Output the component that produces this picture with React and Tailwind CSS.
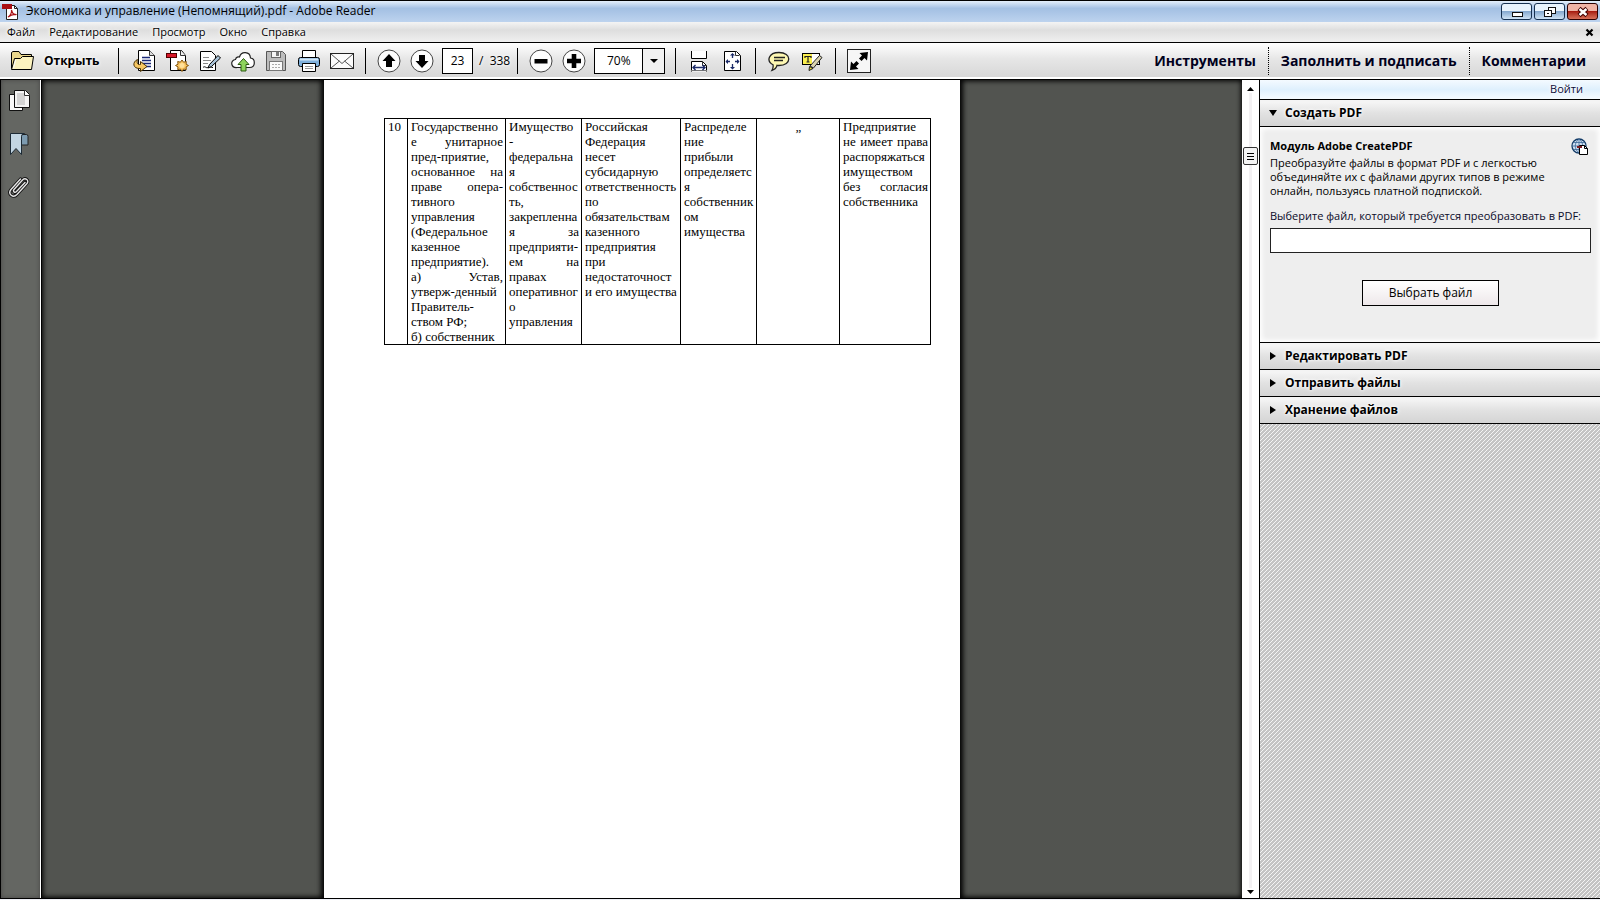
import React, { useState } from 'react';

const MENU = ['Файл', 'Редактирование', 'Просмотр', 'Окно', 'Справка'];

const GLOW = '[text-shadow:0_0_3px_#fff,0_0_5px_#fff]';

// cells of the visible table row: each line is [text, justified]
const CELLS = [
    { width: 'w-[23px]', lines: [['10']] },
    {
        width: 'w-[98px]',
        lines: [
            ['Государственно'],
            ['е унитарное', true],
            ['пред-приятие,'],
            ['основанное на', true],
            ['праве опера-', true],
            ['тивного'],
            ['управления'],
            ['(Федеральное'],
            ['казенное'],
            ['предприятие).'],
            ['а) Устав,', true],
            ['утверж-денный'],
            ['Правитель-'],
            ['ством РФ;'],
            ['б) собственник'],
        ],
    },
    {
        width: 'w-[76px]',
        lines: [
            ['Имущество'],
            ['-'],
            ['федеральна'],
            ['я'],
            ['собственнос'],
            ['ть,'],
            ['закрепленна'],
            ['я за', true],
            ['предприяти-'],
            ['ем на', true],
            ['правах'],
            ['оперативног'],
            ['о'],
            ['управления'],
        ],
    },
    {
        width: 'w-[99px]',
        lines: [
            ['Российская'],
            ['Федерация'],
            ['несет'],
            ['субсидарную'],
            ['ответственность'],
            ['по'],
            ['обязательствам'],
            ['казенного'],
            ['предприятия'],
            ['при'],
            ['недостаточност'],
            ['и его имущества'],
        ],
    },
    {
        width: 'w-[76px]',
        lines: [
            ['Распределе'],
            ['ние'],
            ['прибыли'],
            ['определяетс'],
            ['я'],
            ['собственник'],
            ['ом'],
            ['имущества'],
        ],
    },
    { width: 'w-[83px]', center: true, lines: [['„']] },
    {
        width: 'w-[91px]',
        lines: [
            ['Предприятие'],
            ['не имеет права', true],
            ['распоряжаться'],
            ['имуществом'],
            ['без согласия', true],
            ['собственника'],
        ],
    },
];

const Svg = ({ size = 24, children }) => (
    <svg width={size} height={size} viewBox={`0 0 ${size} ${size}`} fill="none" className="shrink-0">
        {children}
    </svg>
);

const PdfIcon = () => (
    <Svg size={17}>
        <path d="M4.5 2.5h8l3 3v11h-11z" fill="#fff" stroke="#222" />
        <path d="M12.500 2.500v3h3" stroke="#222" />
        <rect x="0" y="1" width="10" height="5" fill="#a80f14" />
        <path d="M6 14c2-1 4-4 3.500-7 1 4 3 5 5 4.500-3-.5-6 .5-8.500 2.500z" stroke="#a80f14" strokeWidth="1.200" />
    </Svg>
);

const FolderIcon = () => (
    <Svg size={26}>
        <path d="M2.500 20.500V4.500l1.500-1h6l2 3h10.500v3" fill="#e9d68c" stroke="#000" />
        <path d="M2.500 21.500l3-11h6l2-2h11l-2 13z" fill="#fcf3bf" stroke="#000" strokeLinejoin="round" />
        <path d="M4.500 20l2.300-8.500" stroke="#fff" />
    </Svg>
);

const ConvertIcon = () => (
    <Svg>
        <path d="M6.500 1.500h11l5 5v15h-16z" fill="#fff" stroke="#000" />
        <path d="M17.500 1.500v5h5" fill="#ddd" stroke="#333" />
        <path d="M10 8.500h8M10 11.500h9M10 14.500h9M14 17.500h5" stroke="#1b2a78" strokeWidth="1.300" />
        <path d="M5.500 10.500C0 13 .5 20 8.500 19.500v3l6.500-5-6.500-5v3c-3 .5-4-1.500-3-5z" fill="#f6c763" stroke="#4b3205" />
    </Svg>
);

const CreatePdfIcon = () => (
    <Svg>
        <path d="M5.500 1.500h11l4 5v15h-15z" fill="#fff" stroke="#000" />
        <path d="M15.500 1.500v5h5" fill="#eee" stroke="#333" />
        <rect x="1.500" y="4.500" width="10" height="4" fill="#d6182a" stroke="#500" />
        <path d="M17 11l1.600 2.200 2.700-.7-.2 2.700 2.400 1.300-2.400 1.400.2 2.700-2.700-.6L17 22.500l-1.600-2.500-2.700.6.3-2.700-2.500-1.400 2.500-1.300-.3-2.700 2.700.7z" fill="#fbc55f" stroke="#85540c" />
        <circle cx="17" cy="16.500" r="2.500" fill="#ffe09a" />
    </Svg>
);

const SignIcon = () => (
    <Svg>
        <path d="M2.500 2.500h11l4 4v15h-15z" fill="#fff" stroke="#000" />
        <path d="M5 8.500h6M5 11.500h8M5 14.500h5" stroke="#888" />
        <path d="M5 18.500c2-2 3 1 5 0s3 0 5 0" stroke="#000" />
        <path d="M20 6.500l2.500 2.500-9 8.500-3.500 1.500 1.500-3.500z" fill="#a9c3d8" stroke="#000" strokeLinejoin="round" />
    </Svg>
);

const CloudIcon = () => (
    <Svg size={26}>
        <path d="M7 19.500C.5 20 0 12 5.500 11.500 6 9 8.500 8.500 9.500 9c1.500-6 10.500-6 11 1 5 .5 5.500 9.500-1 9.500z" fill="#fff" stroke="#222" strokeWidth="1.200" />
        <path d="M13.500 10.500l5.500 6h-3v6.500h-5v-6.500H8z" fill="#8ed45c" stroke="#2c5a12" strokeLinejoin="round" />
    </Svg>
);

const SaveIcon = () => (
    <Svg>
        <path d="M2.500 2.500h16l3 3v16h-19z" fill="#bcbcbc" stroke="#555" />
        <rect x="7.500" y="2.500" width="9" height="6" fill="#f4f4f4" stroke="#666" />
        <rect x="12" y="3" width="3" height="4" fill="#777" />
        <rect x="5.500" y="12.500" width="13" height="9" fill="#fafafa" stroke="#777" />
        <path d="M8 15.500h8M8 18.500h8" stroke="#aaa" strokeDasharray="2 1" />
    </Svg>
);

const PrintIcon = () => (
    <Svg>
        <path d="M5.500 10V1.500h13V10" fill="#fff" stroke="#000" />
        <rect x="1.500" y="8.500" width="21" height="9" rx="2" fill="#7fb0dc" stroke="#000" />
        <path d="M3 10.500h18" stroke="#d3e7f7" strokeWidth="2" />
        <path d="M5.500 14.500h13v8h-13z" fill="#fff" stroke="#000" />
        <path d="M8 17.500h8M8 19.500h8" stroke="#999" />
    </Svg>
);

const MailIcon = () => (
    <Svg size={26}>
        <rect x="1.500" y="5.500" width="23" height="15" fill="#fbfbfb" stroke="#222" />
        <path d="M2 6l11 9.500L24 6M2 20l8.500-7M24 20l-8.500-7" stroke="#555" />
    </Svg>
);

const CIRCLE_SHAPES = {
    up: 'M12 5l6.500 7H15v6H9v-6H5.500z',
    down: 'M12 19l6.500-7H15V6H9v6H5.500z',
    minus: 'M5.500 10h13v4.500h-13z',
    plus: 'M9.700 5h4.600v4.700H19v4.600h-4.700V19H9.700v-4.700H5V9.700h4.700z',
};

const CircleIcon = ({ shape }) => (
    <Svg>
        <circle cx="12" cy="12" r="11" fill="#fdfdfd" stroke="#444" />
        <path d={CIRCLE_SHAPES[shape]} fill="#000" />
    </Svg>
);

const FitWidthIcon = () => (
    <Svg>
        <path d="M4.500 2v7.500h15V2" fill="#fff" stroke="#000" />
        <path d="M4.500 22.500v-10h11l4 4v6" fill="#fff" stroke="#000" />
        <path d="M4 21.500h16" stroke="#777" />
        <path d="M15.500 12.500v4h4" stroke="#333" />
        <path d="M6 18.500h12M8.500 16L6 18.500 8.500 21M15.500 16l2.500 2.500-2.500 2.500" stroke="#1b2a68" strokeWidth="1.400" />
    </Svg>
);

const FitPageIcon = () => (
    <Svg>
        <path d="M4.500 2.500h12l4 4v15h-16z" fill="#fff" stroke="#000" />
        <path d="M15.500 2.500v4h4" stroke="#333" />
        <path d="M12.500 5v4m0 6v4M6 12.500h4m5 0h4" stroke="#1b2a68" strokeWidth="1.300" />
        <path d="M10 6.500l2.500-2.500L15 6.500zM10 18l2.500 2.500L15 18zM8 10l-2.500 2.500L8 15zM17 10l2.500 2.500L17 15z" fill="#1b2a68" />
    </Svg>
);

const CommentIcon = () => (
    <Svg>
        <path d="M12 3.500c13 0 13 13 0 13-1 0-1.500 0-2-.2-.5 2.200-2.500 4.200-5 5 1.200-2 1.400-3.500 1-5.600C-1 12 1.500 3.500 12 3.500z" fill="#fdf7b2" stroke="#222" strokeWidth="1.300" />
        <path d="M7 8.500h11M7 11.500h9" stroke="#222" strokeWidth="1.300" />
    </Svg>
);

const HighlightIcon = () => (
    <Svg>
        <rect x="2.500" y="4.500" width="17" height="11" fill="#fff" stroke="#000" />
        <rect x="3" y="5" width="9" height="10" fill="#fbef4f" />
        <path d="M5 7.500h6M8 7.500V13M6.500 13h3M5 7v2M11 7v2" stroke="#222" strokeWidth="1.200" />
        <path d="M19.500 6.500l2.500 2-8.500 10.500-3.500-2z" fill="#d9d3b0" stroke="#222" strokeLinejoin="round" />
        <path d="M9.500 17.500l3.500 2-4 2z" fill="#f4e32e" stroke="#222" />
    </Svg>
);

const ExpandIcon = () => (
    <Svg size={26}>
        <rect x="1.500" y="1.500" width="23" height="23" fill="#f6f6f6" stroke="#222" />
        <path d="M13.500 5L22 4l-1 8.500-2.500-2.500-3 3-2.500-2.500 3-3z" fill="#000" />
        <path d="M12.500 21L4 22l1-8.500L7.500 16l3-3 2.500 2.500-3 3z" fill="#000" />
    </Svg>
);

const PagesIcon = () => (
    <Svg>
        <path d="M2.500 6.500h13v16h-13z" fill="#f8f8f8" stroke="#111" />
        <path d="M7.500 2.500h11l4 4v13h-15z" fill="#f4f4f4" stroke="#111" />
        <path d="M10 5h8v12h-8z" fill="#d4d4d4" />
        <path d="M17.500 2.500v5h5" fill="#fff" stroke="#333" />
    </Svg>
);

const BookmarkIcon = () => (
    <Svg>
        <path d="M14.500 3.500h5q1.500 0 1.500 2v8.500h-6.500z" fill="#7d9bb0" stroke="#222" />
        <path d="M3.500 2.500h14q-3 0-3 3v18l-5.500-6-5.500 6z" fill="#c3d6e3" stroke="#1d2b36" />
    </Svg>
);

const CLIP = 'M18 8.500l-8.500 9c-1.800 1.800-4-.2-2.500-2L15.500 6c3-3 7 .5 4.500 3.500L10 20.500c-4 4-9.500-.5-6-5L13.500 5';

const ClipIcon = () => (
    <Svg>
        <path d={CLIP} stroke="#111" strokeWidth="3.200" strokeLinecap="round" />
        <path d={CLIP} stroke="#e6e6e6" strokeWidth="1.400" strokeLinecap="round" />
    </Svg>
);

const GlobeIcon = () => (
    <Svg size={18}>
        <circle cx="8" cy="8" r="7" fill="#cfe0f2" stroke="#123a66" strokeWidth="1.300" />
        <path d="M1 8h14M8 1v14M2.500 4.500h11M2.500 11.500h8M8 1C3 5 3 11 8 15M8 1c5 4 5 10 0 14" stroke="#3b6796" strokeWidth=".8" />
        <path d="M8.500 7.500h5l3 3v6h-8z" fill="#fff" stroke="#000" />
        <path d="M13.500 7.500v3h3" stroke="#000" />
        <rect x="6" y="8" width="5" height="2" fill="#7c1a22" />
    </Svg>
);

const TOOLS = [
    ['Преобразовать', ConvertIcon],
    ['Создать PDF', CreatePdfIcon],
    ['Подписать', SignIcon],
    ['Загрузить', CloudIcon],
    ['Сохранить', SaveIcon],
    ['Печать', PrintIcon],
    ['Отправить', MailIcon],
];

const ToolButton = ({ label, children }) => (
    <button type="button" aria-label={label} className="w-8 h-8 flex items-center justify-center">
        {children}
    </button>
);

const Separator = () => <div className="w-px h-[26px] mx-[7px] bg-black" />;

const WindowButton = ({ label, close, children }) => (
    <button
        type="button"
        aria-label={label}
        className={`w-[31px] h-[17px] rounded-[3px] border flex items-center justify-center ${
            close
                ? 'border-[#2b0000] bg-linear-to-b from-[#f0b4a6] from-45% via-[#a81c10] via-50% to-[#d8705a]'
                : 'border-[#16304f] bg-linear-to-b from-[#e8f3fd] from-45% via-[#86a9cf] via-50% to-[#cfe3f5]'
        }`}
    >
        {children}
    </button>
);

const TitleBar = () => (
    <div className="h-[22px] shrink-0 border-t border-black bg-linear-to-b from-[#e4effb] via-[#a3c0e3] via-35% to-[#bdd3ee] flex items-center px-[2px]">
        <PdfIcon />
        <h1 className="ml-[7px] pb-px text-[12px] leading-4 grow">Экономика и управление (Непомнящий).pdf - Adobe Reader</h1>
        <div className="flex gap-[2px]">
            <WindowButton label="Свернуть">
                <Svg size={14}>
                    <rect x="2.500" y="7.500" width="10" height="4" fill="#fff" stroke="#111" />
                </Svg>
            </WindowButton>
            <WindowButton label="Восстановить">
                <Svg size={14}>
                    <rect x="5.500" y="2.500" width="7" height="6" fill="#fff" stroke="#111" />
                    <rect x="1.500" y="5.500" width="7" height="6" fill="#fff" stroke="#111" />
                    <rect x="4" y="8" width="2" height="1" fill="#111" />
                </Svg>
            </WindowButton>
            <WindowButton label="Закрыть" close>
                <Svg size={14}>
                    <path d="M3 3.500l8 7M11 3.500l-8 7" stroke="#400" strokeWidth="4.500" />
                    <path d="M3.500 4l7 6M10.500 4l-7 6" stroke="#fff" strokeWidth="2.400" />
                </Svg>
            </WindowButton>
        </div>
    </div>
);

const MenuBar = () => (
    <nav className="h-5 shrink-0 bg-linear-to-b from-[#f4f4f4] via-[#dedede] via-40% to-[#f0f0f0] flex items-center pl-[7px] pr-[6px] text-[11px] leading-4">
        <div className="grow flex gap-[14px]">
            {MENU.map((item) => (
                <button key={item} type="button" className={GLOW}>
                    {item}
                </button>
            ))}
        </div>
        <button type="button" aria-label="Закрыть документ">
            <Svg size={9}>
                <path d="M1.500 1.500l6 6M7.500 1.500l-6 6" stroke="#000" strokeWidth="2.200" />
            </Svg>
        </button>
    </nav>
);

const Toolbar = () => {
    const [page, setPage] = useState('23');

    return (
        <div className="h-[38px] shrink-0 border-y border-black bg-linear-to-b from-white via-[#e6e6e6] via-45% to-[#d6d6d6] flex items-center justify-between pl-[9px] pr-[14px] pb-px shadow-[inset_0_-2px_0_#fff]">
            <div className="flex items-center">
                <button type="button" className={`w-[102px] flex items-center gap-[9px] text-[12px] font-bold ${GLOW}`}>
                    <FolderIcon />
                    Открыть
                </button>
                <Separator />
                <div className="flex gap-px pl-[2px]">
                    {TOOLS.map(([label, Icon]) => (
                        <ToolButton key={label} label={label}>
                            <Icon />
                        </ToolButton>
                    ))}
                </div>
                <Separator />
                <div className="flex gap-px">
                    <ToolButton label="Предыдущая страница"><CircleIcon shape="up" /></ToolButton>
                    <ToolButton label="Следующая страница"><CircleIcon shape="down" /></ToolButton>
                </div>
                <input
                    aria-label="Номер страницы"
                    value={page}
                    onChange={(e) => setPage(e.target.value)}
                    className="ml-1 w-[31px] h-[26px] border border-black bg-white text-center text-[12px]"
                />
                <span className={`w-[37px] pl-[6px] text-[12px] whitespace-pre ${GLOW}`}>{'/  338'}</span>
                <Separator />
                <div className="flex gap-px">
                    <ToolButton label="Уменьшить"><CircleIcon shape="minus" /></ToolButton>
                    <ToolButton label="Увеличить"><CircleIcon shape="plus" /></ToolButton>
                </div>
                <div className="ml-1 mr-[3px] h-[26px] w-[71px] border border-black bg-white grid">
                    <select
                        aria-label="Масштаб"
                        defaultValue="70%"
                        className="appearance-none col-start-1 row-start-1 pl-3 text-[12px]"
                    >
                        <option>50%</option>
                        <option>70%</option>
                        <option>100%</option>
                    </select>
                    <span className="pointer-events-none col-start-1 row-start-1 justify-self-end w-[22px] border-l border-black bg-[#f1f1f1] flex items-center justify-center">
                        <Svg size={8}>
                            <path d="M0 2h8L4 6z" fill="#000" />
                        </Svg>
                    </span>
                </div>
                <Separator />
                <div className="flex gap-px">
                    <ToolButton label="По ширине"><FitWidthIcon /></ToolButton>
                    <ToolButton label="Страница целиком"><FitPageIcon /></ToolButton>
                </div>
                <Separator />
                <div className="flex gap-px">
                    <ToolButton label="Добавить заметку"><CommentIcon /></ToolButton>
                    <ToolButton label="Выделить текст"><HighlightIcon /></ToolButton>
                </div>
                <Separator />
                <ToolButton label="Режим чтения"><ExpandIcon /></ToolButton>
            </div>
            <div className={`flex items-center text-[14px] font-bold text-[#00001c] ${GLOW}`}>
                <button type="button" className="pr-3">Инструменты</button>
                <button type="button" className="h-7 px-3 border-x border-dotted border-black">Заполнить и подписать</button>
                <button type="button" className="pl-3">Комментарии</button>
            </div>
        </div>
    );
};

const DocumentPage = () => (
    <article className="w-[636px] bg-white pt-[38px] pl-[60px] shadow-[0_0_5px_3px_#000]">
        <table className="table-fixed w-[546px] border-collapse font-['Liberation_Serif',serif] text-[13px] leading-[15px]">
            <tbody>
                <tr>
                    {CELLS.map((cell, i) => (
                        <td
                            key={i}
                            className={`${cell.width} border border-black align-top pl-[3px] pr-[2px] ${cell.center ? 'text-center' : ''}`}
                        >
                            {cell.lines.map(([text, justified], n) => (
                                <div key={n} className={justified ? '[text-align-last:justify]' : 'whitespace-nowrap'}>
                                    {text}
                                </div>
                            ))}
                        </td>
                    ))}
                </tr>
            </tbody>
        </table>
    </article>
);

const ScrollBar = () => (
    <div className="w-[17px] shrink-0 bg-white flex flex-col items-center pt-[6px] pb-[3px]">
        <Svg size={7}>
            <path d="M0 5h7L3.500 1z" fill="#000" />
        </Svg>
        <div className="grow w-[3px] bg-[#f3f1f3] flex flex-col items-center pt-[54px]">
            <div className="w-[15px] h-[18px] shrink-0 rounded-[2px] border border-[#333] bg-[#f4f4f4] flex flex-col items-center justify-center gap-[2px]">
                <div className="w-[7px] h-px bg-black" />
                <div className="w-[7px] h-px bg-black" />
                <div className="w-[7px] h-px bg-black" />
            </div>
        </div>
        <Svg size={7}>
            <path d="M0 2h7L3.500 6z" fill="#000" />
        </Svg>
    </div>
);

const PanelHeader = ({ title, open }) => (
    <button
        type="button"
        aria-expanded={!!open}
        className={`h-[27px] shrink-0 w-full border-b border-black bg-linear-to-b from-[#f4f4f4] from-10% via-[#e2e2e2] to-[#d4d4d4] flex items-center gap-2 pl-[9px] text-left text-[12px] font-bold ${GLOW}`}
    >
        <Svg size={8}>
            <path d={open ? 'M0 1h8L4 7z' : 'M1 0l6 4-6 4z'} fill="#000" />
        </Svg>
        {title}
    </button>
);

const SidePanel = () => (
    <aside className="w-[341px] shrink-0 border-l border-black flex flex-col bg-[linear-gradient(135deg,#f4f4f4_12.5%,#c4c4c4_12.5%_50%,#f4f4f4_50%_62.5%,#c4c4c4_62.5%)] bg-[length:4px_4px]">
        <div className="h-5 shrink-0 border-b border-black bg-linear-to-b from-[#f4faff] via-[#dff0fd] to-[#f6fbff] flex items-center justify-end pr-[17px] pb-px">
            <a href="#login" className={`text-[11px] leading-4 text-[#0c0c38] ${GLOW}`}>Войти</a>
        </div>
        <PanelHeader title="Создать PDF" open />
        <section className="h-[216px] shrink-0 border-b border-black bg-[#eeeeee] shadow-[inset_0_0_5px_2px_#fff] pl-[10px] pr-[9px] pt-[11px]">
            <div className="flex justify-between pr-[2px]">
                <h2 className="text-[11px] leading-4 font-bold">Модуль Adobe CreatePDF</h2>
                <GlobeIcon />
            </div>
            <p className="text-[11px] leading-[14px] w-[290px]">
                Преобразуйте файлы в формат PDF и с легкостью объединяйте их с файлами других типов в режиме онлайн, пользуясь платной подпиской.
            </p>
            <label htmlFor="file" className="block mt-[10px] text-[11px] leading-4 text-[#0a0a28] whitespace-nowrap">
                Выберите файл, который требуется преобразовать в PDF:
            </label>
            <input id="file" type="text" className="block mt-1 w-full h-[25px] border border-[#222] bg-white px-1 text-[12px]" />
            <button type="button" className="block mx-auto mt-[27px] w-[137px] h-[26px] border border-black bg-linear-to-b from-white to-[#eee8ea] text-[12px]">
                Выбрать файл
            </button>
        </section>
        <PanelHeader title="Редактировать PDF" />
        <PanelHeader title="Отправить файлы" />
        <PanelHeader title="Хранение файлов" />
    </aside>
);

const App = () => (
    <div className="h-screen flex flex-col overflow-hidden bg-[#eef0f6] pb-px text-black font-['Open_Sans','Noto_Sans',sans-serif]">
        <TitleBar />
        <MenuBar />
        <Toolbar />
        <div className="grow min-h-0 flex border-b border-black">
            <div className="w-[41px] shrink-0 border-l border-l-black border-r border-r-white bg-[#646662] shadow-[inset_0_0_4px_#444] flex flex-col items-center gap-[19px] pt-2 pr-[3px]">
                <button type="button" aria-label="Миниатюры страниц"><PagesIcon /></button>
                <button type="button" aria-label="Закладки"><BookmarkIcon /></button>
                <button type="button" aria-label="Вложения"><ClipIcon /></button>
            </div>
            <main className="grow min-w-0 overflow-hidden border-l border-black bg-[#525450] shadow-[inset_0_0_5px_1px_#000] flex justify-center">
                <DocumentPage />
            </main>
            <ScrollBar />
            <SidePanel />
        </div>
    </div>
);

export default App;
